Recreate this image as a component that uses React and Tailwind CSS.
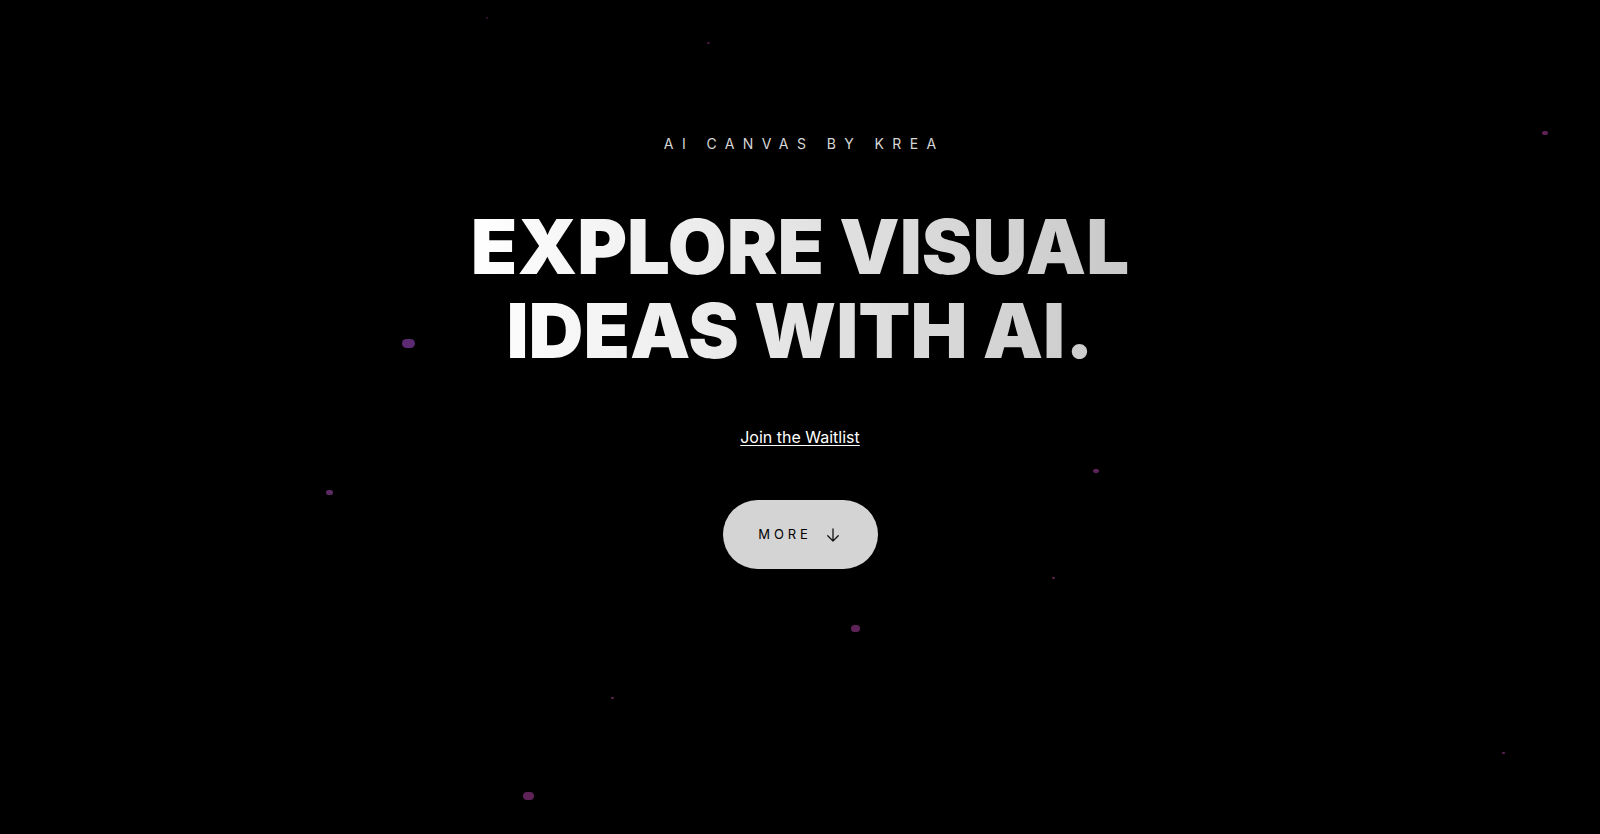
import React from "react";

const dots = [
  { l: 402, t: 339, w: 13, h: 9, c: "#5b2a72", o: 1 },
  { l: 326, t: 490, w: 7, h: 5, c: "#5b2a62", o: 1 },
  { l: 523, t: 792, w: 11, h: 8, c: "#5e2356", o: 1 },
  { l: 851, t: 625, w: 9, h: 7, c: "#5e2356", o: 1 },
  { l: 1093, t: 469, w: 6, h: 4, c: "#5e2356", o: 1 },
  { l: 1542, t: 131, w: 6, h: 4, c: "#5e2356", o: 1 },
  { l: 1052, t: 577, w: 3, h: 2, c: "#5e2356", o: 1 },
  { l: 611, t: 697, w: 3, h: 2, c: "#5e2356", o: 1 },
  { l: 1502, t: 752, w: 3, h: 2, c: "#5e2356", o: 1 },
  { l: 707, t: 42, w: 3, h: 2, c: "#5e2356", o: 0.7 },
  { l: 486, t: 17, w: 2, h: 2, c: "#5e2356", o: 0.6 },
];

export default function App() {
  return (
    <div className="relative w-full h-[834px] bg-black overflow-hidden" style={{ fontFamily: "Inter, 'Liberation Sans', sans-serif" }}>
      {dots.map((d, i) => (
        <span
          key={i}
          className="absolute rounded-full"
          style={{ left: d.l, top: d.t, width: d.w, height: d.h, background: d.c, opacity: d.o }}
        />
      ))}
      <main className="relative flex flex-col items-center pt-[135px]">
        <p className="text-[14px] leading-[18px] tracking-[0.6em] text-[#d6d6d6] pl-[0.6em]">AI CANVAS BY KREA</p>
        <h1 className="mt-[51px] text-center text-[76px] leading-[84px] font-black tracking-normal bg-gradient-to-r from-white to-[#c9c9c9] bg-clip-text text-transparent">
          EXPLORE VISUAL
          <br />
          IDEAS WITH AI.
        </h1>
        <a href="#" className="mt-[55px] text-[16px] leading-[20px] text-white underline underline-offset-2">Join the Waitlist</a>
        <button className="mt-[53px] w-[155px] h-[69px] rounded-full bg-[#d4d4d4] flex items-center justify-center gap-[12px]">
          <span className="text-[13px] tracking-[0.3em] text-black">MORE</span>
          <svg width="18" height="18" viewBox="0 0 24 24" fill="none" stroke="#111" strokeWidth="1.7" strokeLinecap="round" strokeLinejoin="round">
            <path d="M12 4v16M5 13l7 7 7-7" />
          </svg>
        </button>
      </main>
    </div>
  );
}
